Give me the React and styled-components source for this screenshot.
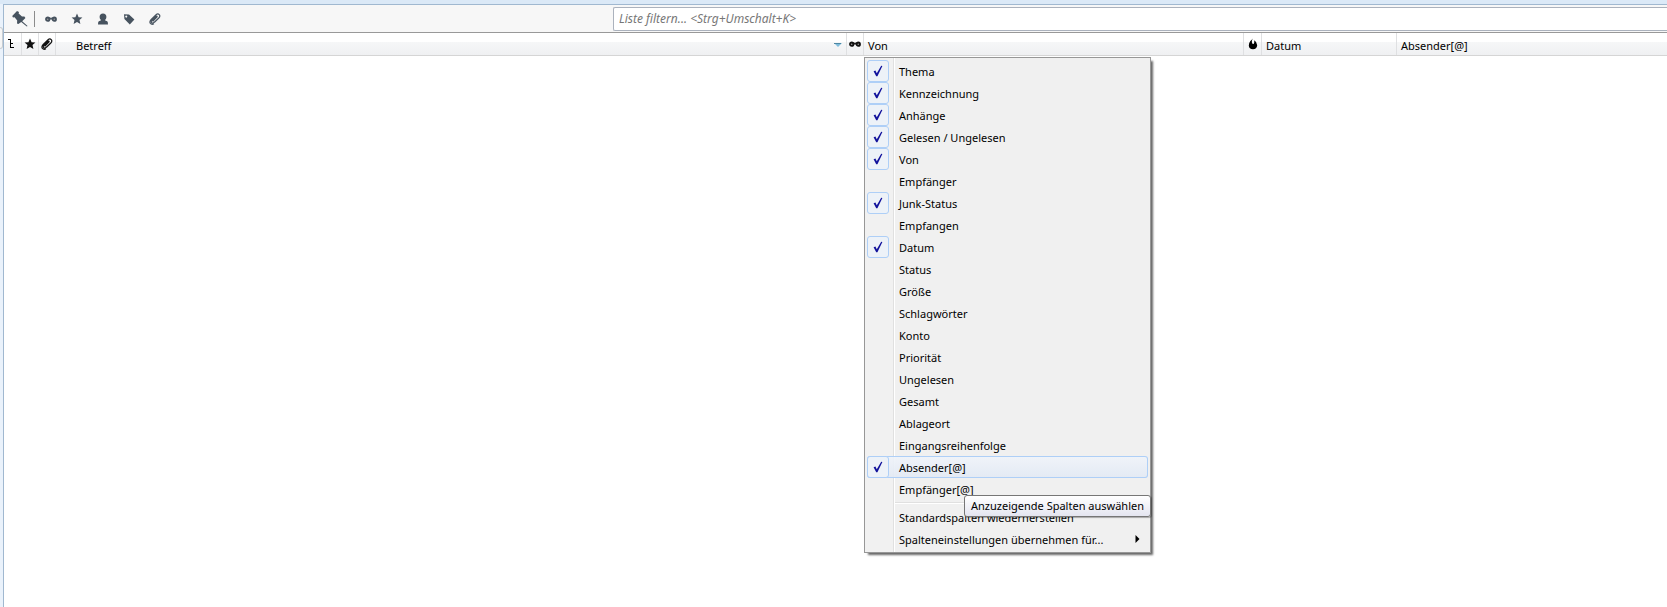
import React, { useState } from "react";
import styled, { createGlobalStyle, css } from "styled-components";

const GlobalStyle = createGlobalStyle`
  * {
    box-sizing: border-box;
  }
  body {
    margin: 0;
    background: #fff;
    color: #000;
    font-family: "Noto Sans", "Open Sans", sans-serif;
    font-size: 11px;
  }
`;

const Frame = styled.div`
  display: flex;
  min-height: 100vh;
  border-top: 4px solid #dbe9f7;
  overflow: hidden;
`;

const Splitter = styled.div`
  flex: none;
  width: 3px;
  padding-top: 23px;
  background: #eaf2fb;
`;

const SplitterTab = styled.div`
  height: 22px;
  background: #f6f6f6;
  border: 1px solid #c8cdd2;
  border-left: 0;
  border-radius: 0 3px 3px 0;
`;

const Pane = styled.main`
  flex: 1;
  min-width: 0;
  border-top: 1px solid #a0b8d0;
  border-left: 1px solid #a0b8d0;
`;

const Toolbar = styled.div`
  display: flex;
  align-items: center;
  height: 28px;
  padding-left: 7px;
  background: #f7f7f7;
  border-bottom: 1px solid #999;
`;

const ToolButton = styled.button`
  display: flex;
  align-items: center;
  justify-content: center;
  width: ${({ $wide }) => ($wide ? "18px" : "26px")};
  height: 22px;
  padding: 0;
  color: #47535f;
  background: none;
  border: 0;
`;

const ToolDivider = styled.div`
  width: 1px;
  height: 16px;
  margin: 0 3px 0 5px;
  background: #8c8c8c;
`;

const FilterBox = styled.input`
  flex: 1;
  min-width: 0;
  height: 24px;
  margin-left: 445px;
  padding: 0 5px;
  font: inherit;
  font-size: 12px;
  background: #fff;
  border: 1px solid #abb2bd;
  border-right: 0;
  border-radius: 2px 0 0 2px;
  outline: none;
  &::placeholder {
    color: #777;
    font-style: italic;
    opacity: 1;
  }
`;

const List = styled.table`
  display: block;
  font-size: inherit;
  thead {
    display: block;
  }
`;

const HeaderRow = styled.tr`
  display: grid;
  grid-template-columns: 18px 17px 17px minmax(0, 791fr) 17px minmax(0, 380fr) 18px 135px minmax(0, 270fr);
  height: 23px;
  background: linear-gradient(#fff 0, #fff 9px, #f6f7f8 9px, #eff0f2 100%);
  border-bottom: 1px solid #d5d5d5;
`;

const HeaderCell = styled.th`
  position: relative;
  display: flex;
  padding: 0;
  font-weight: normal;
  border-right: 1px solid #dfe0e2;
  &:last-child {
    border-right: 0;
  }
`;

const HeaderButton = styled.button`
  flex: 1;
  display: flex;
  align-items: center;
  justify-content: ${({ $icon }) => ($icon ? "center" : "space-between")};
  min-width: 0;
  padding: ${({ $icon, $indent }) => ($icon ? "0" : $indent ? "2px 4px 0 20px" : "2px 4px 0")};
  font: inherit;
  color: ${({ $icon }) => ($icon ? "#111" : "inherit")};
  background: none;
  border: 0;
`;

const Menu = styled.div`
  position: absolute;
  top: 24px;
  left: 0;
  z-index: 1;
  width: 287px;
  padding: 2px;
  text-align: left;
  background: linear-gradient(90deg, #f1f1f1 28px, #e0e0e0 28px, #e0e0e0 29px, #fff 29px, #fff 30px, #f0f0f0 30px);
  border: 1px solid #979797;
  box-shadow: 3px 3px 2px -1px rgba(0, 0, 0, 0.6);
`;

const rowStyle = css`
  display: grid;
  grid-template-columns: 22px 1fr 13px;
  column-gap: 10px;
  align-items: center;
  width: 281px;
  height: 22px;
  padding: 0;
  border-radius: 3px;
`;

const CheckItem = styled.label`
  ${rowStyle}
  ${({ $active }) =>
    $active &&
    css`
      background: linear-gradient(rgba(240, 244, 250, 0.9), rgba(226, 233, 244, 0.9));
      box-shadow: inset 0 0 0 1px #aecff7;
    `}
`;

const ActionItem = styled.button`
  ${rowStyle}
  font: inherit;
  color: inherit;
  text-align: left;
  background: none;
  border: 0;
`;

const Tick = styled.span`
  display: grid;
  place-items: center;
  > * {
    grid-area: 1 / 1;
  }
  svg {
    visibility: hidden;
    pointer-events: none;
  }
  input:checked + svg {
    visibility: visible;
  }
`;

const Checkbox = styled.input`
  appearance: none;
  width: 22px;
  height: 22px;
  margin: 0;
  border-radius: 3px;
  outline: none;
  &:checked {
    background: #edf2f8;
    border: 1px solid #aecff7;
  }
`;

const MenuLabel = styled.span`
  padding-top: 1px;
  white-space: nowrap;
`;

const MenuSeparator = styled.div`
  height: 2px;
  margin: 2px 0 2px 28px;
  background: #fff;
  border-top: 1px solid #e0e0e0;
`;

const Tooltip = styled.div`
  position: absolute;
  right: -1px;
  bottom: 35px;
  height: 22px;
  padding: 0 6px;
  line-height: 20px;
  white-space: nowrap;
  background: linear-gradient(#fff, #e4e5f0);
  border: 1px solid #767676;
  border-radius: 3px;
  box-shadow: 1px 1px 1px rgba(0, 0, 0, 0.3);
`;

const PinIcon = () => (
  <svg width="16" height="16" viewBox="0 0 16 16" fill="currentColor">
    <path d="M5 0 7 1 6.6 2.4 10 5.6 12.4 5.6 13.4 7 10.2 10.2 15.6 15 14.8 15.6 9.2 11 6.4 13 5 12.4 5.2 9.6 2.6 6.2 1 6.6.2 5z" />
  </svg>
);

const GlassesIcon = () => (
  <svg width="12" height="6" viewBox="0 0 12 6" fill="none" stroke="currentColor">
    <circle cx="2.7" cy="3.2" r="1.7" strokeWidth="1.8" fill="#999" />
    <circle cx="9.3" cy="3.2" r="1.7" strokeWidth="1.8" fill="#999" />
    <path d="M3 1.5Q6 3 9 1.5M4.5 2.8h3" strokeWidth="1.2" />
  </svg>
);

const StarIcon = () => (
  <svg width="12" height="12" viewBox="0 0 12 12" fill="currentColor">
    <path d="M6 .6 7.6 4.2 11.4 4.5 8.5 7.1 9.4 11 6 8.9 2.6 11 3.5 7.1.6 4.5 4.4 4.2z" />
  </svg>
);

const PersonIcon = () => (
  <svg width="12" height="12" viewBox="0 0 12 12" fill="currentColor">
    <path d="M6 .5C8.2.5 9.4 1.8 9.4 3.7 9.4 5.2 8.8 6.2 8.2 6.8V7.6L10.2 8.2Q11 8.6 11 11.5H1Q1 8.6 1.8 8.2L3.8 7.6V6.8C3.2 6.2 2.6 5.2 2.6 3.7 2.6 1.8 3.8.5 6 .5z" />
  </svg>
);

const TagIcon = () => (
  <svg width="12" height="12" viewBox="0 0 12 12" fill="currentColor" fillRule="evenodd">
    <path d="M1 1.2 6 1.5 11.4 6.6 6.8 11.4 1.4 6zM3.2 2.4a1 1 0 1 0 .1 0z" />
  </svg>
);

const ClipIcon = () => (
  <svg width="12" height="12" viewBox="0 0 12 12" fill="none" stroke="currentColor" strokeWidth="1.2" strokeLinecap="round">
    <path d="M4 8 8 4Q8.4 2.8 7.2 3.2L3 7.2Q1.6 9 2.8 9.8 4 10.6 5.4 9.2L9.8 5Q11.6 3 10.2 1.6 8.8.2 6.8 2L2 6.6Q.2 8.8 1.4 10.4 2.6 11.8 4.6 11" />
  </svg>
);

const ThreadIcon = () => (
  <svg width="9" height="10" viewBox="0 0 9 10" fill="none" stroke="#000" shapeRendering="crispEdges">
    <path d="M0 .5h3M2.5 0v9M3 4.5h2M3 8.5h3" />
  </svg>
);

const FlameIcon = () => (
  <svg width="10" height="12" viewBox="0 0 10 12">
    <path d="M4.6.4Q3.6 2.4 4 5 4.7 6.6 5.8 5.8 6.6 4.4 6.2 2.2 9.2 4 9.2 7.2 8.8 11.2 5 11.3 1 11.1.8 7.4.9 4.8 2.4 3 3.6 2 4.6.4z" />
  </svg>
);

const SortArrow = () => (
  <svg width="8" height="4" viewBox="0 0 8 4">
    <path d="M0 0h8L4 4z" fill="#7fbcdb" />
    <path d="M0 .5h7" stroke="#4d87a3" />
  </svg>
);

const CheckIcon = () => (
  <svg width="10" height="12" viewBox="0 0 10 12">
    <path d="M.6 6.2 2.4 5.6 3.8 8.2 8.2.8 9.4 1 4.4 11.2 3.2 11.2z" fill="#12129c" />
  </svg>
);

const SubmenuArrow = () => (
  <svg width="5" height="8" viewBox="0 0 5 8">
    <path d="M.5 0 4.5 4 .5 8z" />
  </svg>
);

const columns = [
  { name: "Thema", checked: true },
  { name: "Kennzeichnung", checked: true },
  { name: "Anhänge", checked: true },
  { name: "Gelesen / Ungelesen", checked: true },
  { name: "Von", checked: true },
  { name: "Empfänger" },
  { name: "Junk-Status", checked: true },
  { name: "Empfangen" },
  { name: "Datum", checked: true },
  { name: "Status" },
  { name: "Größe" },
  { name: "Schlagwörter" },
  { name: "Konto" },
  { name: "Priorität" },
  { name: "Ungelesen" },
  { name: "Gesamt" },
  { name: "Ablageort" },
  { name: "Eingangsreihenfolge" },
  { name: "Absender[@]", checked: true },
  { name: "Empfänger[@]" },
];

function ColumnMenu() {
  const [items, setItems] = useState(columns);
  const [active, setActive] = useState("Absender[@]");

  const toggle = (name) => {
    setItems(items.map((item) => (item.name === name ? { ...item, checked: !item.checked } : item)));
  };

  return (
    <Menu>
      {items.map((item) => (
        <CheckItem key={item.name} $active={item.name === active} onMouseEnter={() => setActive(item.name)}>
          <Tick>
            <Checkbox type="checkbox" checked={!!item.checked} onChange={() => toggle(item.name)} />
            <CheckIcon />
          </Tick>
          <MenuLabel>{item.name}</MenuLabel>
        </CheckItem>
      ))}
      <MenuSeparator />
      <ActionItem type="button">
        <span />
        <MenuLabel>Standardspalten wiederherstellen</MenuLabel>
      </ActionItem>
      <ActionItem type="button">
        <span />
        <MenuLabel>Spalteneinstellungen übernehmen für...</MenuLabel>
        <SubmenuArrow />
      </ActionItem>
      {/* sits over the last entries */}
      <Tooltip role="tooltip">Anzuzeigende Spalten auswählen</Tooltip>
    </Menu>
  );
}

function IconHeader({ label, children }) {
  return (
    <HeaderCell scope="col">
      <HeaderButton type="button" $icon aria-label={label}>{children}</HeaderButton>
    </HeaderCell>
  );
}

export default function App() {
  const [filter, setFilter] = useState("");

  return (
    <>
      <GlobalStyle />
      <Frame>
        <Splitter>
          <SplitterTab />
        </Splitter>
        <Pane>
          <Toolbar>
            <ToolButton type="button" $wide aria-label="Filterleiste anheften"><PinIcon /></ToolButton>
            <ToolDivider />
            <ToolButton type="button" aria-label="Ungelesen"><GlassesIcon /></ToolButton>
            <ToolButton type="button" aria-label="Gekennzeichnet"><StarIcon /></ToolButton>
            <ToolButton type="button" aria-label="Kontakt"><PersonIcon /></ToolButton>
            <ToolButton type="button" aria-label="Schlagwörter"><TagIcon /></ToolButton>
            <ToolButton type="button" aria-label="Anhang"><ClipIcon /></ToolButton>
            <FilterBox
              type="text"
              aria-label="Liste filtern"
              placeholder="Liste filtern... <Strg+Umschalt+K>"
              value={filter}
              onChange={(e) => setFilter(e.target.value)}
            />
          </Toolbar>
          <List>
            <thead>
              <HeaderRow>
                <IconHeader label="Thema"><ThreadIcon /></IconHeader>
                <IconHeader label="Kennzeichnung"><StarIcon /></IconHeader>
                <IconHeader label="Anhänge"><ClipIcon /></IconHeader>
                <HeaderCell scope="col">
                  <HeaderButton type="button" $indent>
                    Betreff
                    <SortArrow />
                  </HeaderButton>
                </HeaderCell>
                <IconHeader label="Gelesen / Ungelesen"><GlassesIcon /></IconHeader>
                <HeaderCell scope="col">
                  <HeaderButton type="button">Von</HeaderButton>
                  <ColumnMenu />
                </HeaderCell>
                <IconHeader label="Junk-Status"><FlameIcon /></IconHeader>
                <HeaderCell scope="col">
                  <HeaderButton type="button">Datum</HeaderButton>
                </HeaderCell>
                <HeaderCell scope="col">
                  <HeaderButton type="button">Absender[@]</HeaderButton>
                </HeaderCell>
              </HeaderRow>
            </thead>
          </List>
        </Pane>
      </Frame>
    </>
  );
}
